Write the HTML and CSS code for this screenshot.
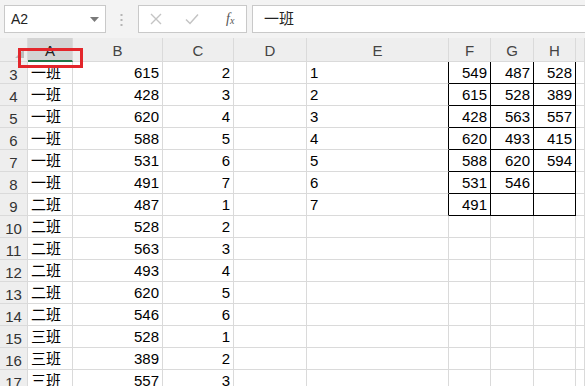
FILE: index.html
```html
<!DOCTYPE html>
<html lang="zh-CN">
<head>
    <meta charset="UTF-8">
    <meta name="viewport" content="width=device-width, initial-scale=1.0">
    <title>Sheet1</title>
    <link rel="stylesheet" href="styles.css">
</head>
<body>
    <div class="toolbar">
        <div class="name-box">
            <span>A2</span>
            <svg class="caret" width="9" height="5" viewBox="0 0 9 5"><path d="M0 0h9L4.5 5z" fill="#7a7a7a"/></svg>
        </div>
        <svg class="grip" width="3" height="12" viewBox="0 0 3 12">
            <rect x="0.5" y="0" width="2" height="2" fill="#b5b5b5"/>
            <rect x="0.5" y="5" width="2" height="2" fill="#b5b5b5"/>
            <rect x="0.5" y="10" width="2" height="2" fill="#b5b5b5"/>
        </svg>
        <div class="fx-buttons">
            <svg width="12" height="12" viewBox="0 0 12 12"><path d="M1 1l10 10M11 1L1 11" stroke="#c4c4c4" stroke-width="1.4"/></svg>
            <svg width="14" height="12" viewBox="0 0 14 12"><path d="M1 6.5l4 4L13 1.5" stroke="#c4c4c4" stroke-width="1.5" fill="none"/></svg>
            <span class="fx">f<sub>x</sub></span>
        </div>
        <div class="formula">一班</div>
    </div>

    <div class="sheet">
        <div class="corner">
            <svg class="select-all" width="9" height="9" viewBox="0 0 9 9"><path d="M9 0v9H0z" fill="#bdbdbd"/></svg>
        </div>
        <div class="ch ch-active">A</div>
        <div class="ch">B</div>
        <div class="ch">C</div>
        <div class="ch">D</div>
        <div class="ch">E</div>
        <div class="ch">F</div>
        <div class="ch">G</div>
        <div class="ch">H</div>
        <div class="ch"></div>

        <div class="rh">3</div><div class="cell">一班</div><div class="cell num">615</div><div class="cell num">2</div><div class="cell"></div><div class="cell box-l">1</div><div class="cell num box">549</div><div class="cell num box">487</div><div class="cell num box">528</div><div class="cell"></div>
        <div class="rh">4</div><div class="cell">一班</div><div class="cell num">428</div><div class="cell num">3</div><div class="cell"></div><div class="cell box-l">2</div><div class="cell num box">615</div><div class="cell num box">528</div><div class="cell num box">389</div><div class="cell"></div>
        <div class="rh">5</div><div class="cell">一班</div><div class="cell num">620</div><div class="cell num">4</div><div class="cell"></div><div class="cell box-l">3</div><div class="cell num box">428</div><div class="cell num box">563</div><div class="cell num box">557</div><div class="cell"></div>
        <div class="rh">6</div><div class="cell">一班</div><div class="cell num">588</div><div class="cell num">5</div><div class="cell"></div><div class="cell box-l">4</div><div class="cell num box">620</div><div class="cell num box">493</div><div class="cell num box">415</div><div class="cell"></div>
        <div class="rh">7</div><div class="cell">一班</div><div class="cell num">531</div><div class="cell num">6</div><div class="cell"></div><div class="cell box-l">5</div><div class="cell num box">588</div><div class="cell num box">620</div><div class="cell num box">594</div><div class="cell"></div>
        <div class="rh">8</div><div class="cell">一班</div><div class="cell num">491</div><div class="cell num">7</div><div class="cell"></div><div class="cell box-l">6</div><div class="cell num box">531</div><div class="cell num box">546</div><div class="cell num box"></div><div class="cell"></div>
        <div class="rh">9</div><div class="cell">二班</div><div class="cell num">487</div><div class="cell num">1</div><div class="cell"></div><div class="cell box-l">7</div><div class="cell num box">491</div><div class="cell num box"></div><div class="cell num box"></div><div class="cell"></div>
        <div class="rh">10</div><div class="cell">二班</div><div class="cell num">528</div><div class="cell num">2</div><div class="cell"></div><div class="cell"></div><div class="cell"></div><div class="cell"></div><div class="cell"></div><div class="cell"></div>
        <div class="rh">11</div><div class="cell">二班</div><div class="cell num">563</div><div class="cell num">3</div><div class="cell"></div><div class="cell"></div><div class="cell"></div><div class="cell"></div><div class="cell"></div><div class="cell"></div>
        <div class="rh">12</div><div class="cell">二班</div><div class="cell num">493</div><div class="cell num">4</div><div class="cell"></div><div class="cell"></div><div class="cell"></div><div class="cell"></div><div class="cell"></div><div class="cell"></div>
        <div class="rh">13</div><div class="cell">二班</div><div class="cell num">620</div><div class="cell num">5</div><div class="cell"></div><div class="cell"></div><div class="cell"></div><div class="cell"></div><div class="cell"></div><div class="cell"></div>
        <div class="rh">14</div><div class="cell">二班</div><div class="cell num">546</div><div class="cell num">6</div><div class="cell"></div><div class="cell"></div><div class="cell"></div><div class="cell"></div><div class="cell"></div><div class="cell"></div>
        <div class="rh">15</div><div class="cell">三班</div><div class="cell num">528</div><div class="cell num">1</div><div class="cell"></div><div class="cell"></div><div class="cell"></div><div class="cell"></div><div class="cell"></div><div class="cell"></div>
        <div class="rh">16</div><div class="cell">三班</div><div class="cell num">389</div><div class="cell num">2</div><div class="cell"></div><div class="cell"></div><div class="cell"></div><div class="cell"></div><div class="cell"></div><div class="cell"></div>
        <div class="rh">17</div><div class="cell">三班</div><div class="cell num">557</div><div class="cell num">3</div><div class="cell"></div><div class="cell"></div><div class="cell"></div><div class="cell"></div><div class="cell"></div><div class="cell"></div>
    </div>

    <div class="mark"></div>
</body>
</html>
```

FILE: styles.css
```css
body {
    margin: 0;
    font-family: "Liberation Sans", "Noto Sans CJK SC", sans-serif;
    font-size: 15px;
    color: #000;
    background: #fff;
    overflow: hidden;
    position: relative;
    height: 386px;
}
.toolbar {
    height: 38px;
    box-sizing: border-box;
    background: #f3f3f3;
    display: flex;
    align-items: flex-start;
    padding-top: 5px;
}
.name-box {
    margin-left: 4px;
    width: 102px;
    height: 28px;
    box-sizing: border-box;
    background: #fff;
    border: 1px solid #c9c9c9;
    display: flex;
    align-items: center;
    justify-content: space-between;
    padding: 0 6px 0 6px;
    font-size: 14px;
    color: #222;
}
.grip {
    margin: 9px 15px 0 14px;
}
.fx-buttons {
    width: 109px;
    height: 28px;
    box-sizing: border-box;
    background: #fff;
    border: 1px solid #c9c9c9;
    display: flex;
    align-items: center;
    padding: 0 11px 0 11px;
    gap: 23px;
}
.fx {
    font-family: "Liberation Serif", serif;
    font-style: italic;
    font-size: 14px;
    color: #555;
    margin-left: 4px;
}
.fx sub {
    font-size: 10px;
    vertical-align: -1px;
}
.formula {
    margin-left: 5px;
    flex: 1;
    height: 28px;
    box-sizing: border-box;
    background: #fff;
    border: 1px solid #c9c9c9;
    border-right: none;
    padding: 0 11px;
    line-height: 26px;
    color: #222;
}
.sheet {
    display: grid;
    grid-template-columns: 28px 45px 90px 71px 73px 142px 42px 43px 42px 1fr;
    grid-template-rows: 24px;
    grid-auto-rows: 22px;
}
.sheet > div {
    box-sizing: border-box;
    border-right: 1px solid #dadada;
    border-bottom: 1px solid #dadada;
    white-space: nowrap;
    overflow: hidden;
}
.corner {
    background: #eeeeee;
    position: relative;
}
.select-all {
    position: absolute;
    right: 3px;
    bottom: 3px;
}
.ch {
    background: #eeeeee;
    color: #444;
    text-align: center;
    line-height: 20px;
    padding-top: 3px;
}
.sheet > .ch-active {
    background: #d3d3d3;
    border-bottom: 2px solid #217346;
    color: #222;
}
.rh {
    background: #eeeeee;
    color: #333;
    text-align: center;
    line-height: 18px;
    padding-top: 4px;
}
.cell {
    line-height: 21px;
    padding: 0 3px;
}
.num {
    text-align: right;
}
.sheet > .box {
    border-right-color: #000;
    border-bottom-color: #000;
}
.sheet > .box-l {
    border-right-color: #000;
}
.mark {
    position: absolute;
    left: 18px;
    top: 48px;
    width: 65px;
    height: 20px;
    box-sizing: border-box;
    border: 3px solid #e3262b;
}
```
